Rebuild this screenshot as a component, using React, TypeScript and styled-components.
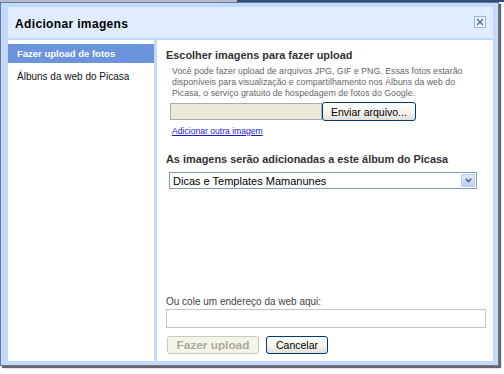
import React from "react";
import styled, { createGlobalStyle } from "styled-components";

const GlobalStyle = createGlobalStyle`
  html, body {
    margin: 0;
    padding: 0;
    background: #fff;
  }
  body {
    width: 504px;
    height: 374px;
    overflow: hidden;
    font-family: "Liberation Sans", Arial, sans-serif;
  }
`;

export default function App() {
  return (
    <>
      <GlobalStyle />
      <PageStrip />
      <Dialog>
        <TitleBar>
          <Title>Adicionar imagens</Title>
          <CloseButton aria-label="Fechar">
            <svg width="8" height="8" viewBox="0 0 8 8">
              <path d="M1 1 L7 7 M7 1 L1 7" stroke="#5f77a8" strokeWidth="1.6" />
            </svg>
          </CloseButton>
        </TitleBar>
        <Body>
          <Nav>
            <NavItem $active>Fazer upload de fotos</NavItem>
            <NavItem>Álbuns da web do Picasa</NavItem>
          </Nav>
          <Panel>
            <SectionTitle>Escolher imagens para fazer upload</SectionTitle>
            <Hint>
              Você pode fazer upload de arquivos JPG, GIF e PNG. Essas fotos estarão
              <br />
              disponíveis para visualização e compartilhamento nos Álbuns da web do
              <br />
              Picasa, o serviço gratuito de hospedagem de fotos do Google.
            </Hint>
            <FileRow>
              <FileField />
              <XpButton>Enviar arquivo...</XpButton>
            </FileRow>
            <AddLink href="#">Adicionar outra imagem</AddLink>
            <SectionTitle $spaced>As imagens serão adicionadas a este álbum do Picasa</SectionTitle>
            <Select>
              <span>Dicas e Templates Mamanunes</span>
              <ArrowButton>
                <svg width="7" height="5" viewBox="0 0 7 5">
                  <path d="M0.8 0.8 L3.5 3.6 L6.2 0.8" fill="none" stroke="#4b5f8c" strokeWidth="1.5" />
                </svg>
              </ArrowButton>
            </Select>
            <Spacer />
            <UrlLabel>Ou cole um endereço da web aqui:</UrlLabel>
            <UrlInput />
            <Actions>
              <XpButton disabled $width={92} $bold>
                Fazer upload
              </XpButton>
              <XpButton $width={62}>Cancelar</XpButton>
            </Actions>
          </Panel>
        </Body>
      </Dialog>
    </>
  );
}

const PageStrip = styled.div`
  height: 2px;
  background: linear-gradient(to right, #b4bccb 0, #b4bccb 237px, #2f4d7d 237px);
`;

const Dialog = styled.div`
  box-sizing: border-box;
  width: 499px;
  height: 364px;
  display: flex;
  flex-direction: column;
  gap: 2px;
  padding: 4px 5px 4px 7px;
  background: #c3d9ff;
  border: 1px solid #6a7896;
  box-shadow: 2px 2px 1px rgba(0, 0, 0, 0.6);
`;

const TitleBar = styled.div`
  height: 31px;
  display: flex;
  align-items: center;
  justify-content: space-between;
  padding: 0 7px;
  background: #e0ecff;
`;

const Title = styled.h1`
  margin: 3px 0 0;
  font-size: 12px;
  letter-spacing: 0.35px;
  font-weight: bold;
  color: #000;
`;

const CloseButton = styled.div`
  box-sizing: border-box;
  width: 12px;
  height: 12px;
  margin-top: -2px;
  display: flex;
  align-items: center;
  justify-content: center;
  border: 1px solid #9db2dc;
  background: #eaf1ff;
`;

const Body = styled.div`
  flex: 1;
  display: flex;
  gap: 3px;
`;

const Nav = styled.div`
  width: 146px;
  background: #fff;
  padding-top: 4px;
  display: flex;
  flex-direction: column;
  gap: 4px;
`;

const NavItem = styled.div<{ $active?: boolean }>`
  height: 19px;
  line-height: 19px;
  padding-left: 9px;
  font-size: ${(p) => (p.$active ? "9.5px" : "10px")};
  font-weight: ${(p) => (p.$active ? "bold" : "normal")};
  color: ${(p) => (p.$active ? "#fff" : "#111")};
  background: ${(p) => (p.$active ? "#6b94dd" : "transparent")};
`;

const Panel = styled.div`
  flex: 1;
  display: flex;
  flex-direction: column;
  align-items: flex-start;
  padding: 8px 7px 7px 9px;
  background: #fff;
`;

const SectionTitle = styled.h2<{ $spaced?: boolean }>`
  margin: ${(p) => (p.$spaced ? "15px" : "0")} 0 0;
  font-size: 10.9px;
  line-height: 14px;
  font-weight: bold;
  color: #333;
  white-space: nowrap;
`;

const Hint = styled.p`
  margin: 4px 0 0 6px;
  font-size: 8.8px;
  line-height: 11px;
  color: #666;
  white-space: nowrap;
`;

const FileRow = styled.div`
  display: flex;
  align-items: center;
  height: 19px;
  margin: 3px 0 0 4px;
`;

const FileField = styled.div`
  box-sizing: border-box;
  width: 152px;
  height: 17px;
  background: #ece9d8;
  border: 1px solid #a9adb3;
`;

const XpButton = styled.button<{ $width?: number; $bold?: boolean }>`
  box-sizing: border-box;
  height: 19px;
  ${(p) => (p.$width ? `width: ${p.$width}px;` : "padding: 0 8px;")}
  font-family: "Liberation Sans", Arial, sans-serif;
  font-size: ${(p) => (p.$bold ? "11.8px" : "10.5px")};
  font-weight: ${(p) => (p.$bold ? "bold" : "normal")};
  color: #000;
  border: 1px solid #003c74;
  border-radius: 3px;
  background: linear-gradient(#ffffff, #f4f3ee 55%, #e2e0d6);
  white-space: nowrap;

  &:disabled {
    color: #aca899;
    border-color: #cac8bb;
    background: #f5f4ea;
  }
`;

const AddLink = styled.a`
  margin: 4px 0 0 6px;
  font-size: 8.6px;
  line-height: 12px;
  color: #1a1acc;
  text-decoration: underline;
`;

const Select = styled.div`
  box-sizing: border-box;
  width: 308px;
  height: 17px;
  margin: 6px 0 0 3px;
  display: flex;
  align-items: center;
  padding-left: 3px;
  border: 1px solid #7f9db9;
  font-size: 11px;
  color: #000;
`;

const ArrowButton = styled.div`
  box-sizing: border-box;
  width: 14px;
  height: 13px;
  margin: 0 1px 0 auto;
  display: flex;
  align-items: center;
  justify-content: center;
  border: 1px solid #bccdf2;
  border-radius: 1px;
  background: linear-gradient(#dfe8fc, #bccff6);
`;

const Spacer = styled.div`
  flex: 1;
`;

const UrlLabel = styled.div`
  font-size: 10px;
  line-height: 12px;
  color: #444;
`;

const UrlInput = styled.div`
  box-sizing: border-box;
  width: 320px;
  height: 19px;
  margin-top: 1px;
  border: 1px solid #c4c4c4;
`;

const Actions = styled.div`
  display: flex;
  gap: 7px;
  margin: 8px 0 0 1px;

  & > button {
    height: 18px;
  }
`;
